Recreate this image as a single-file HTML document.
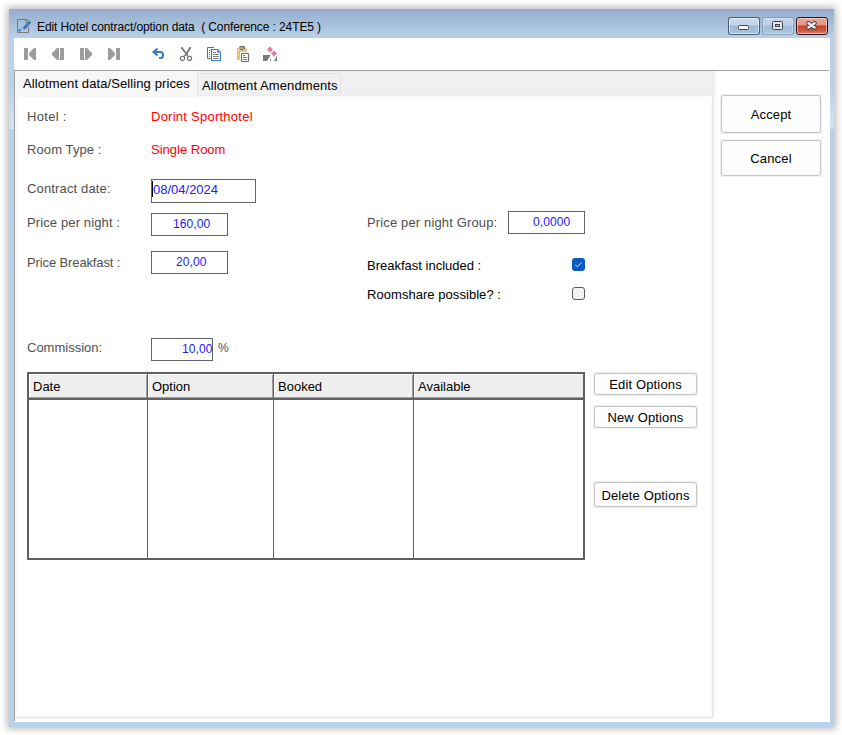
<!DOCTYPE html>
<html><head><meta charset="utf-8">
<style>
*{margin:0;padding:0;box-sizing:border-box}
html,body{width:842px;height:735px;background:#fff;overflow:hidden;position:relative;font-family:"Liberation Sans",sans-serif}
.a{position:absolute}
.t{position:absolute;white-space:nowrap;font-size:13px;line-height:18px;color:#000}
.g{color:#4f4f4f}
.r{color:#f00}
.bl{color:#2020ff}
#win{left:9px;top:9px;width:825px;height:718px;background:#b9d1ea;
 box-shadow:0 0 7px 2px rgba(0,0,0,0.28);}
#tb{left:0;top:0;width:825px;height:29px;background:linear-gradient(#94aeca,#b9d1ea)}
#client{left:14px;top:38px;width:816px;height:684px;background:#fff}
.inp{position:absolute;border:1px solid #646464;background:#fff}
.btn{position:absolute;background:#f0f0f0}
.btn>div{position:absolute;left:1px;top:1px;right:1px;bottom:1px;border:1px solid #c4c4c4;border-radius:3px;background:#fdfdfd}
.btn>span{position:absolute;left:0;right:0;text-align:center;font-size:13px;line-height:18px;color:#000;white-space:nowrap;letter-spacing:0.15px}
</style></head><body>
<div id="win" class="a">
  <div id="tb" class="a"></div>
</div>
<!-- title icon -->
<svg class="a" style="left:0;top:0" width="842" height="40" viewBox="0 0 842 40">
  <path d="M27.5,19.5 H17.5 V32.5 H28.5 V27" fill="none" stroke="#7a7a7a" stroke-width="1"/>
  <circle cx="27" cy="21.5" r="1.5" fill="none" stroke="#7a7a7a" stroke-width="1"/>
  <path d="M30.2,21.6 L23.6,28.9" stroke="#3b78bd" stroke-width="2.9" stroke-linecap="butt"/>
  <path d="M18.5,31 L21,29.5" stroke="#3b78bd" stroke-width="2"/>
</svg>
<div class="t" style="left:37px;top:18px;font-size:12px;letter-spacing:-0.1px;color:#000">Edit Hotel contract/option data&nbsp; ( Conference : 24TE5 )</div>
<!-- caption buttons -->
<div class="a" style="left:728px;top:17px;width:32px;height:18px;border:1px solid rgba(40,55,80,0.75);border-radius:3px;background:linear-gradient(#c8daee 0,#c2d5ea 7px,#9db7d5 8px,#a8c2de 100%);box-shadow:inset 0 0 0 1px rgba(255,255,255,0.55)"></div>
<div class="a" style="left:738px;top:25px;width:11px;height:5px;border:1px solid #3a4556;border-radius:1.5px;background:#f4f4f4"></div>
<div class="a" style="left:762px;top:17px;width:32px;height:18px;border:1px solid rgba(80,100,130,0.45);border-radius:3px;background:linear-gradient(#c0d4ea 0,#bcd1e8 7px,#a3bcd8 8px,#adc5e0 100%);box-shadow:inset 0 0 0 1px rgba(255,255,255,0.35)"></div>
<div class="a" style="left:772px;top:21px;width:11px;height:9px;border:1px solid #3a3f52;border-radius:1.5px;background:#e4e4e4"></div>
<div class="a" style="left:775px;top:24px;width:5px;height:3px;border:1px solid #3a4556;background:#a8c0dc"></div>
<div class="a" style="left:796px;top:17px;width:32px;height:18px;border:1px solid #3c0a14;border-radius:3px;background:linear-gradient(#eaa898 0,#e39482 7px,#c2432b 8px,#c85a44 13px,#d98a78 100%);box-shadow:inset 0 0 0 1px rgba(255,220,210,0.6)"></div>
<svg class="a" style="left:796px;top:17px" width="32" height="18" viewBox="0 0 32 18">
  <path d="M12.4,6.2 L18.6,10.6 M18.6,6.2 L12.4,10.6" stroke="#2f3a4c" stroke-width="4.2" stroke-linecap="round"/>
  <path d="M12.4,6.2 L18.6,10.6 M18.6,6.2 L12.4,10.6" stroke="#f0f0f0" stroke-width="2.4" stroke-linecap="round"/>
</svg>

<div id="client" class="a"></div>
<div class="a" style="left:9px;top:86px;width:5px;height:43px;background:linear-gradient(rgba(215,229,245,0),rgba(215,229,245,0.95))"></div>
<div class="a" style="left:830px;top:86px;width:4px;height:43px;background:linear-gradient(rgba(215,229,245,0),rgba(215,229,245,0.95))"></div>

<!-- toolbar icons -->
<svg class="a" style="left:0;top:40px" width="300" height="28" viewBox="0 40 300 28">
  <g fill="#9c9c9c">
    <rect x="24" y="48" width="4" height="12"/>
    <path d="M34,48 H36 V60 H34 L29,55 V53 Z"/>
    <path d="M57,48 H59 V60 H57 L52,55 V53 Z"/>
    <rect x="60" y="48" width="4" height="12"/>
    <rect x="80" y="48" width="4" height="12"/>
    <path d="M87,48 H85 V60 H87 L92,55 V53 Z"/>
    <path d="M110,48 H108 V60 H110 L115,55 V53 Z"/>
    <rect x="116" y="48" width="4" height="12"/>
  </g>
  <path d="M157.5,48.5 L153.5,52 L157.5,55.5 M153.5,52 H160.5 Q163,52 163,54.5 V56 Q163,58 160.5,58 H159" fill="none" stroke="#3b78bd" stroke-width="2"/>
  <g stroke="#6e6e6e" fill="none">
    <path d="M180.5,47.6 L182.3,46.9 L188.3,55.4 L187.2,56.3 Z" fill="#6e6e6e" stroke="none"/>
    <path d="M191.4,47.6 L189.6,46.9 L185.8,53.6 L186.9,54.8 Z" fill="#6e6e6e" stroke="none"/>
    <path d="M184,56.3 L186,54.5 M188,56.3 L187.2,55.6" stroke-width="1.2"/>
    <circle cx="182.5" cy="58.3" r="2.1" stroke-width="1.15"/>
    <circle cx="189.5" cy="58.3" r="2.1" stroke-width="1.15"/>
  </g>
  <g>
    <path d="M214,47.5 H207.5 V58.5 H211" fill="none" stroke="#6e6e6e" stroke-width="1"/>
    <g fill="#6e6e6e"><rect x="209" y="50" width="1" height="1"/><rect x="209" y="52" width="1" height="1"/><rect x="209" y="54" width="1" height="1"/><rect x="209" y="56" width="1" height="1"/></g>
    <path d="M211.5,49.5 H217.5 L220.5,52.5 V60.5 H211.5 Z" fill="#fff" stroke="#3b78bd" stroke-width="1.1"/>
    <circle cx="218.3" cy="51.7" r="0.9" fill="none" stroke="#3b78bd" stroke-width="1"/>
    <path d="M213,52.5 H216 M213,54.5 H218.8 M213,56.5 H218.8 M213,58.5 H218.8" stroke="#6e6e6e" stroke-width="0.9"/>
  </g>
  <g>
    <path d="M237,48 H238.6 V50.3 H245.4 V48 H247 V51.9 H240 V60 H237 Z" fill="#e9c271"/>
    <rect x="239.2" y="46" width="5.8" height="3.9" rx="1.4" fill="#6e6e6e"/>
    <rect x="240.3" y="47.6" width="3.6" height="1" fill="#f4f0e6"/>
    <rect x="241.5" y="53.5" width="7" height="8" rx="0.8" fill="#fff" stroke="#6e6e6e" stroke-width="1.2"/>
    <path d="M243,55.5 H245 M243,57.5 H247 M243,59.5 H247" stroke="#6e6e6e" stroke-width="0.9"/>
  </g>
  <g>
    <path d="M270,46.5 L273,49.5 L270,52.5 L267,49.5 Z" fill="#e57b95"/>
    <path d="M274,50.5 L277,53.5 L274,56.5 L271,53.5 Z" fill="#e57b95"/>
    <path d="M263,55 H270.5 L267,61 H263 Z" fill="#7a7a7a"/>
    <path d="M270,59.5 L271,58 V61 H270 Z" fill="#888"/>
    <path d="M277,56 V61 H274 Z" fill="#7a7a7a"/>
  </g>
</svg>

<!-- panel borders -->
<div class="a" style="left:14px;top:70px;width:815px;height:1px;background:#a0a0a0"></div>
<div class="a" style="left:14px;top:70px;width:1px;height:651px;background:#a0a0a0"></div>
<!-- tab strip -->
<div class="a" style="left:15px;top:71px;width:700px;height:24px;background:#f0f0f0"></div>
<!-- active tab -->
<div class="a" style="left:15px;top:71px;width:182px;height:26px;background:#f7f7f7"></div>
<div class="t" style="left:23px;top:75px;letter-spacing:0.1px">Allotment data/Selling prices</div>
<!-- inactive tab -->
<div class="a" style="left:197px;top:73px;width:144px;height:23px;background:#f0f0f0;border:1px solid #e3e3e3;border-bottom:none"></div>
<div class="t" style="left:202px;top:77px;letter-spacing:0.1px">Allotment Amendments</div>
<!-- tab page frame -->
<div class="a" style="left:15px;top:95px;width:700px;height:624px;background:#f7f7f7"></div>
<div class="a" style="left:15px;top:95px;width:698px;height:623px;border-right:1px solid #e3e3e3;border-bottom:1px solid #e3e3e3;background:#f9f9f9"></div>
<div class="a" style="left:197px;top:95px;width:516px;height:1px;background:#ececec"></div>
<div class="a" style="left:15px;top:95px;width:182px;height:2px;background:#f7f7f7"></div>
<div class="a" style="left:18px;top:97px;width:693px;height:618px;background:#fff"></div>

<!-- form -->
<div class="t g" style="left:27px;top:108px;letter-spacing:0.3px">Hotel :</div>
<div class="t r" style="left:151px;top:108px;letter-spacing:0.25px">Dorint Sporthotel</div>
<div class="t g" style="left:27px;top:141px;letter-spacing:0.1px">Room Type :</div>
<div class="t r" style="left:151px;top:141px">Single Room</div>

<div class="t g" style="left:27px;top:180px;letter-spacing:0.15px">Contract date:</div>
<div class="inp" style="left:151px;top:179px;width:105px;height:24px"></div>
<div class="t bl" style="left:153px;top:181px">08/04/2024</div>
<div class="a" style="left:152px;top:181px;width:1px;height:16px;background:#000"></div>

<div class="t g" style="left:27px;top:214px;letter-spacing:0.12px">Price per night :</div>
<div class="inp" style="left:151px;top:213px;width:77px;height:23px"></div>
<div class="t bl" style="left:173px;top:215px;font-size:12px;letter-spacing:0.1px">160,00</div>

<div class="t g" style="left:27px;top:254px;letter-spacing:-0.12px">Price Breakfast :</div>
<div class="inp" style="left:151px;top:251px;width:77px;height:23px"></div>
<div class="t bl" style="left:176px;top:253px;font-size:12px;letter-spacing:0.1px">20,00</div>

<div class="t g" style="left:367px;top:214px;letter-spacing:0.14px">Price per night Group:</div>
<div class="inp" style="left:508px;top:211px;width:77px;height:23px"></div>
<div class="t bl" style="left:533px;top:213px;font-size:12px;letter-spacing:0.1px">0,0000</div>

<div class="t" style="left:367px;top:257px">Breakfast included :</div>
<div class="a" style="left:572px;top:258px;width:13px;height:13px;border-radius:3px;background:#0b5cc0"></div>
<svg class="a" style="left:572px;top:258px" width="13" height="13" viewBox="0 0 13 13"><path d="M3.4,6.9 L5.4,8.7 L9.5,4.6" fill="none" stroke="#fff" stroke-width="0.9"/></svg>
<div class="t" style="left:367px;top:286px;letter-spacing:0.05px">Roomshare possible? :</div>
<div class="a" style="left:572px;top:287px;width:13px;height:13px;border-radius:3px;border:1px solid #5c5c5c;background:#f2f2f2"></div>

<div class="t g" style="left:27px;top:339px">Commission:</div>
<div class="inp" style="left:151px;top:338px;width:62px;height:23px"></div>
<div class="t bl" style="left:182px;top:340px;font-size:12px;letter-spacing:0.1px">10,00</div>
<div class="t g" style="left:218px;top:339px;font-size:12px">%</div>

<!-- grid -->
<div class="a" style="left:27px;top:372px;width:558px;height:188px;border:2px solid #616161;background:#fff"></div>
<div class="a" style="left:29px;top:374px;width:554px;height:23px;background:#efefef"></div>
<div class="a" style="left:29px;top:397px;width:554px;height:1px;background:#a0a0a0"></div>
<div class="a" style="left:29px;top:398px;width:554px;height:2px;background:#616161"></div>
<!-- header highlights -->
<div class="a" style="left:29px;top:374px;width:554px;height:1px;background:#fff"></div>
<div class="a" style="left:29px;top:374px;width:1px;height:23px;background:#fff"></div>
<div class="a" style="left:148px;top:374px;width:1px;height:23px;background:#fff"></div>
<div class="a" style="left:274px;top:374px;width:1px;height:23px;background:#fff"></div>
<div class="a" style="left:414px;top:374px;width:1px;height:23px;background:#fff"></div>
<div class="a" style="left:146px;top:375px;width:1px;height:23px;background:#a0a0a0"></div>
<div class="a" style="left:272px;top:375px;width:1px;height:23px;background:#a0a0a0"></div>
<div class="a" style="left:412px;top:375px;width:1px;height:23px;background:#a0a0a0"></div>
<div class="a" style="left:147px;top:374px;width:1px;height:184px;background:#616161"></div>
<div class="a" style="left:273px;top:374px;width:1px;height:184px;background:#616161"></div>
<div class="a" style="left:413px;top:374px;width:1px;height:184px;background:#616161"></div>
<div class="t" style="left:33px;top:378px">Date</div>
<div class="t" style="left:152px;top:378px">Option</div>
<div class="t" style="left:278px;top:378px">Booked</div>
<div class="t" style="left:418px;top:378px">Available</div>

<!-- option buttons -->
<div class="btn" style="left:593px;top:372px;width:105px;height:24px"><div></div><span style="top:4px">Edit Options</span></div>
<div class="btn" style="left:593px;top:405px;width:105px;height:24px"><div></div><span style="top:4px">New Options</span></div>
<div class="btn" style="left:593px;top:481px;width:105px;height:27px"><div></div><span style="top:6px">Delete Options</span></div>

<!-- accept/cancel -->
<div class="btn" style="left:720px;top:94px;width:102px;height:40px"><div></div><span style="top:12px">Accept</span></div>
<div class="btn" style="left:720px;top:139px;width:102px;height:38px"><div></div><span style="top:11px">Cancel</span></div>
</body></html>
